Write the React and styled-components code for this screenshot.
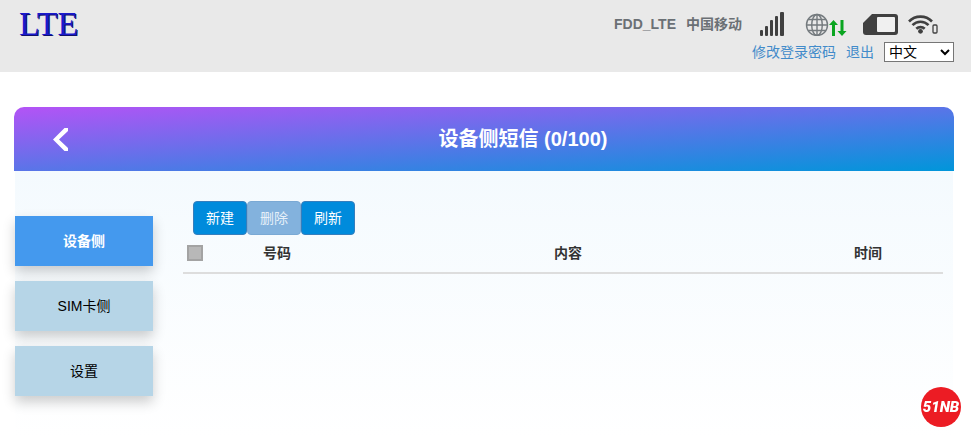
import React, { useState } from 'react';
import styled, { createGlobalStyle } from 'styled-components';

const GlobalStyle = createGlobalStyle`
  * {
    box-sizing: border-box;
  }

  body {
    margin: 0;
    background: #fff;
    color: #333;
    font-family: "Liberation Sans", "Noto Sans CJK SC", sans-serif;
    font-size: 14px;
    line-height: 20px;
  }
`;

const Header = styled.header`
  display: flex;
  justify-content: space-between;
  align-items: flex-start;
  min-height: 72px;
  padding: 8px 17px 8px 19px;
  background: #e9e9e9;
`;

const Logo = styled.div`
  color: #1a1acc;
  font-family: "Liberation Serif", serif;
  font-size: 34px;
  line-height: 32px;
  text-shadow: 1px 1px 0 #10106a;
`;

const HeaderTools = styled.div`
  display: flex;
  flex-direction: column;
  align-items: flex-end;
`;

const StatusBar = styled.div`
  display: flex;
  align-items: center;
  height: 32px;
  padding-right: 16px;
  color: #6b7075;
  font-weight: bold;
`;

const StatusText = styled.span`
  margin-right: ${({ $gap }) => $gap}px;
`;

const StatusIcon = styled.svg`
  display: block;
  flex: none;
  margin-right: ${({ $gap }) => $gap || 0}px;
`;

const LinkBar = styled.div`
  display: flex;
  align-items: center;
  gap: 10px;
  height: 24px;
`;

const HeaderLink = styled.a`
  color: #428bca;
  text-decoration: none;

  &:hover {
    text-decoration: underline;
  }
`;

const LangSelect = styled.select`
  width: 70px;
  height: 20px;
  padding: 0;
  border: 1px solid #767676;
  border-radius: 0;
  background: #fff;
  color: #000;
  font: inherit;
  line-height: 18px;
`;

const Main = styled.main`
  padding: 35px 17px 0 14px;
`;

const TitleBar = styled.div`
  display: grid;
  grid-template-columns: 78px 1fr;
  align-items: center;
  height: 64px;
  border-radius: 10px 10px 0 0;
  background: linear-gradient(to bottom right, #b453f6, #0096da);
`;

const BackButton = styled.button`
  justify-self: end;
  width: 40px;
  height: 40px;
  padding: 0;
  border: 0;
  background: none;
  cursor: pointer;

  svg {
    display: block;
  }
`;

const Title = styled.h1`
  margin: 0;
  color: #fff;
  font-size: 20px;
  line-height: 28px;
  text-align: center;
`;

const Content = styled.div`
  display: flex;
  align-items: flex-start;
  gap: 30px;
  min-height: 266px;
  margin: 0 1px;
  padding: 30px 10px 40px 0;
  background: linear-gradient(#f4fafe, #fff);
`;

const SideMenu = styled.nav`
  display: flex;
  flex: none;
  flex-direction: column;
  gap: 15px;
  width: 138px;
  padding-top: 15px;
`;

const SideItem = styled.a`
  height: 50px;
  background: ${({ $active }) => ($active ? '#4499ee' : '#b6d5e7')};
  box-shadow: 0 6px 12px rgba(0, 0, 0, 0.2);
  color: ${({ $active }) => ($active ? '#fff' : '#000')};
  font-weight: ${({ $active }) => ($active ? 'bold' : 'normal')};
  line-height: 50px;
  text-align: center;
  text-decoration: none;
`;

const Panel = styled.section`
  flex: 1;
  min-width: 0;
`;

const Toolbar = styled.div`
  display: flex;
  padding-left: 10px;
`;

const ToolButton = styled.button`
  width: 54px;
  height: 34px;
  padding: 0;
  border: 1px solid #357ebd;
  border-radius: 4px;
  background: #008bdc;
  color: #fff;
  font: inherit;
  cursor: pointer;

  &:disabled {
    border-color: #7aa9d4;
    background: #83b2dd;
    color: #e6f0f9;
    cursor: default;
  }
`;

const SmsTable = styled.table`
  width: 100%;
  border-collapse: collapse;
  table-layout: fixed;
`;

const HeadCell = styled.th`
  width: ${({ $width }) => $width};
  height: 38px;
  padding: 0 0 2px;
  border-bottom: 2px solid #ddd;
  text-align: center;
`;

const CheckAll = styled.input`
  display: block;
  width: 16px;
  height: 16px;
  margin: 0 0 0 4px;
  appearance: none;
  border: 2px solid #a3a3a3;
  background: #b8b8b8;

  &:checked {
    background: #008bdc;
  }
`;

// stays in the bottom right corner while the page scrolls
const Badge = styled.div`
  position: fixed;
  right: 10px;
  bottom: 10px;
  width: 40px;
  height: 40px;
  border-radius: 50%;
  background: #ec1c24;
  color: #fff;
  font-family: Roboto, "Liberation Sans", sans-serif;
  font-size: 15px;
  font-style: italic;
  font-weight: 900;
  line-height: 40px;
  text-align: center;
`;

const menu = [
  { id: 'device', label: '设备侧' },
  { id: 'sim', label: 'SIM卡侧' },
  { id: 'settings', label: '设置' },
];

const SignalIcon = () => (
  <StatusIcon $gap={19} width="26" height="24" viewBox="0 0 26 24" fill="#404040">
    <rect x="0" y="18" width="3" height="6" rx="1" />
    <rect x="5" y="14" width="3" height="10" rx="1" />
    <rect x="10" y="8" width="3" height="16" rx="1" />
    <rect x="15" y="4" width="3" height="20" rx="1" />
    <rect x="20" y="0" width="4" height="24" rx="1" />
  </StatusIcon>
);

const GlobeIcon = () => (
  <StatusIcon $gap={16} width="42" height="24" viewBox="0 0 42 24">
    <g fill="none" stroke="#747a7e" strokeWidth="1.4">
      <circle cx="12" cy="13" r="10.5" />
      <ellipse cx="12" cy="13" rx="5.3" ry="10.5" />
      <path d="M12 2.5v21M1.5 13h21M3.2 7.5h17.6M3.2 18.5h17.6" />
    </g>
    <path d="M28.5 8l4.500 5h-3v11h-3V13h-3z" fill="#0aa520" />
    <path d="M37 24l-4.500-5h3V8h3v11h3z" fill="#0aa520" />
  </StatusIcon>
);

const SimIcon = () => (
  <StatusIcon $gap={10} width="35" height="21" viewBox="0 0 35 21">
    <path d="M9 0H32a3 3 0 0 1 3 3V18a3 3 0 0 1-3 3H3a3 3 0 0 1-3-3V9z" fill="#404040" />
    <rect x="14" y="3" width="18" height="15" rx="1" fill="#f0f0f0" />
  </StatusIcon>
);

const WifiIcon = () => (
  <StatusIcon width="30" height="20" viewBox="0 0 30 20">
    <g fill="none" stroke="#404040" strokeWidth="2.6">
      <path d="M1 7.500a16 16 0 0 1 23 0" />
      <path d="M4.500 11.200a11 11 0 0 1 16 0" />
      <path d="M8.300 14.800a6 6 0 0 1 8.400 0" />
    </g>
    <circle cx="12.500" cy="17.300" r="2.400" fill="#404040" />
    <rect x="25" y="11" width="4" height="8" rx="1" fill="none" stroke="#404040" strokeWidth="1.3" />
  </StatusIcon>
);

const App = () => {
  const [active, setActive] = useState('device');

  return (
    <>
      <GlobalStyle />
      <Header>
        <Logo>LTE</Logo>
        <HeaderTools>
          <StatusBar>
            <StatusText $gap={10}>FDD_LTE</StatusText>
            <StatusText $gap={18}>中国移动</StatusText>
            <SignalIcon />
            <GlobeIcon />
            <SimIcon />
            <WifiIcon />
          </StatusBar>
          <LinkBar>
            <HeaderLink href="#password">修改登录密码</HeaderLink>
            <HeaderLink href="#logout">退出</HeaderLink>
            <LangSelect aria-label="语言" defaultValue="zh">
              <option value="zh">中文</option>
              <option value="en">English</option>
            </LangSelect>
          </LinkBar>
        </HeaderTools>
      </Header>
      <Main>
        <TitleBar>
          <BackButton type="button" aria-label="返回">
            <svg width="40" height="40" viewBox="0 0 40 40" fill="#fff">
              <path d="M12.500 9h3.500v3L7 20.500l9 8.500v3h-3.500L1 20.500z" />
            </svg>
          </BackButton>
          <Title>设备侧短信 (0/100)</Title>
        </TitleBar>
        <Content>
          <SideMenu>
            {menu.map((item) => (
              <SideItem
                key={item.id}
                href={`#${item.id}`}
                $active={active === item.id}
                onClick={() => setActive(item.id)}
              >
                {item.label}
              </SideItem>
            ))}
          </SideMenu>
          <Panel>
            <Toolbar>
              <ToolButton type="button">新建</ToolButton>
              <ToolButton type="button" disabled>删除</ToolButton>
              <ToolButton type="button">刷新</ToolButton>
            </Toolbar>
            <SmsTable>
              <thead>
                <tr>
                  <HeadCell $width="28px">
                    <CheckAll type="checkbox" aria-label="全选" />
                  </HeadCell>
                  <HeadCell $width="132px">号码</HeadCell>
                  <HeadCell>内容</HeadCell>
                  <HeadCell $width="150px">时间</HeadCell>
                </tr>
              </thead>
            </SmsTable>
          </Panel>
        </Content>
      </Main>
      <Badge>51NB</Badge>
    </>
  );
};

export default App;
